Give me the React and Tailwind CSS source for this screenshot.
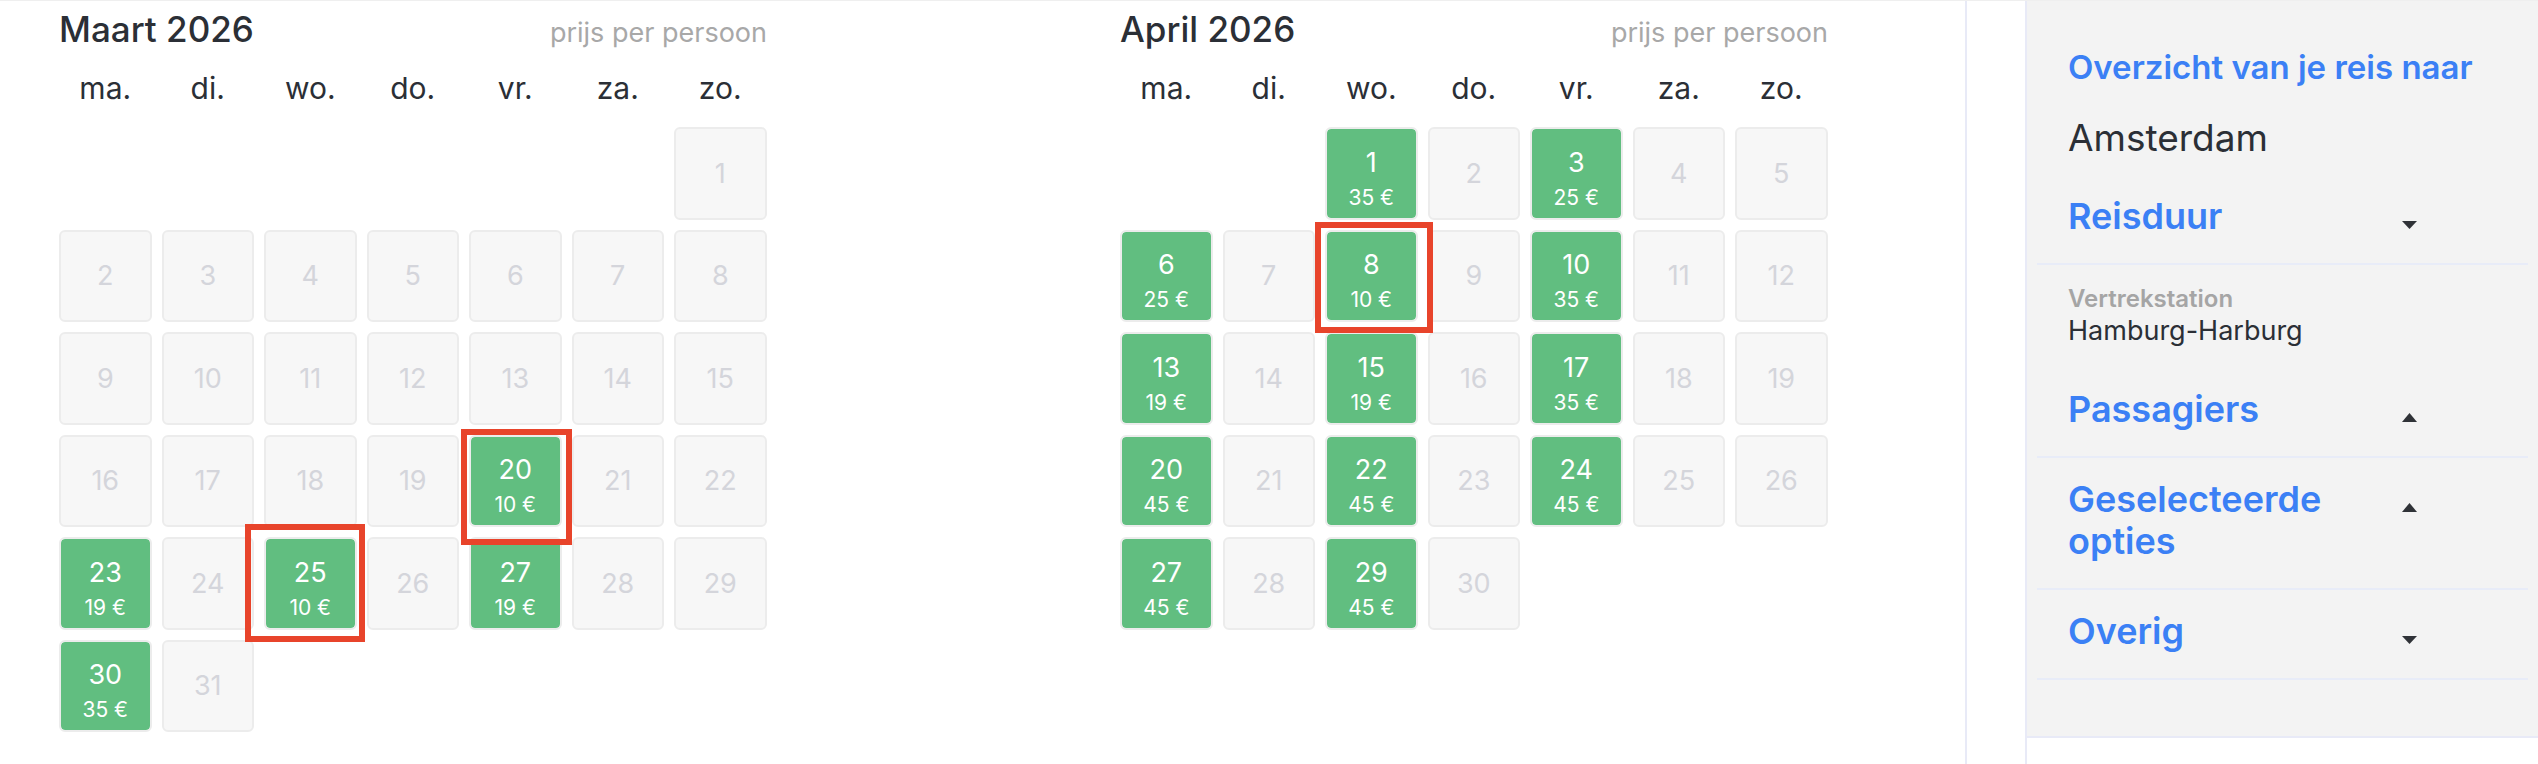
import React from 'react';

const WEEKDAYS = ['ma.', 'di.', 'wo.', 'do.', 'vr.', 'za.', 'zo.'];

const MONTHS = [
  {
    title: 'Maart 2026',
    offset: 6,
    days: 31,
    prices: { 20: 10, 23: 19, 25: 10, 27: 19, 30: 35 },
  },
  {
    title: 'April 2026',
    offset: 2,
    days: 30,
    prices: { 1: 35, 3: 25, 6: 25, 8: 10, 10: 35, 13: 19, 15: 19, 17: 35, 20: 45, 22: 45, 24: 45, 27: 45, 29: 45 },
  },
];

// red annotation boxes drawn over the calendar
const MARKS = [
  'left-[461px] top-[428px] w-[111px] h-[116px]',
  'left-[245px] top-[523px] w-[120px] h-[118px]',
  'left-[1315px] top-[221px] w-[118px] h-[111px]',
];

function DayCell({ day, price }) {
  if (price) {
    return (
      <div className="rounded-[6px] border-2 border-[#ececec] bg-[#61be80] bg-clip-padding flex flex-col items-center justify-center pt-[10px] gap-[11px] text-white">
        <span className="text-[27px] leading-[27px]">{day}</span>
        <span className="text-[21px] leading-[21px]">{price} €</span>
      </div>
    );
  }
  return (
    <div className="rounded-[6px] border-2 border-[#ececec] bg-[#f7f7f7] flex items-center justify-center text-[27px] leading-[27px] text-[#d4d5db]">
      {day}
    </div>
  );
}

function Month({ title, offset, days, prices }) {
  const blanks = Array.from({ length: offset });
  const list = Array.from({ length: days }, (_, i) => i + 1);
  return (
    <div className="w-[708px]">
      <div className="h-[46px] flex justify-between items-baseline pt-[10px]">
        <span className="text-[35px] leading-[36px] font-medium text-[#2b2f36]">{title}</span>
        <span className="text-[27px] leading-[30px] text-[#a8a8a8]">prijs per persoon</span>
      </div>
      <div className="mt-[26px] grid grid-cols-[repeat(7,92.5px)] gap-x-[10px] text-[30px] leading-[30px] text-center text-[#2b2f36]">
        {WEEKDAYS.map((w) => (
          <span key={w}>{w}</span>
        ))}
      </div>
      <div className="mt-[24px] grid grid-cols-[repeat(7,92.5px)] auto-rows-[92.5px] gap-[10px]">
        {blanks.map((_, i) => (
          <div key={'b' + i} />
        ))}
        {list.map((d) => (
          <DayCell key={d} day={d} price={prices[d]} />
        ))}
      </div>
    </div>
  );
}

function Triangle({ up }) {
  return up ? (
    <svg width="15" height="9" viewBox="0 0 15 9" className="mt-[25px]">
      <polygon points="7.5,0 15,9 0,9" fill="#2f3237" />
    </svg>
  ) : (
    <svg width="15" height="8" viewBox="0 0 15 8" className="mt-[26px]">
      <polygon points="0,0 15,0 7.5,8" fill="#2f3237" />
    </svg>
  );
}

function AccordionRow({ title, up, className = '' }) {
  return (
    <div className={'flex items-start pl-[31px] pt-[20px] pb-[26px] border-b-2 border-[#e8ecf8] ' + className}>
      <div className="w-[334px] text-[36px] leading-[42px] font-semibold text-[#3b80f5]">{title}</div>
      <Triangle up={up} />
    </div>
  );
}

export default function App() {
  return (
    <div
      className="relative w-[2538px] h-[764px] bg-white flex overflow-hidden border-t border-[#efefef]"
      style={{ fontFamily: 'Inter, "Noto Sans", sans-serif' }}
    >
      {/* Calendars */}
      <div className="w-[1967px] shrink-0 border-r-2 border-[#e8eaf7] flex pl-[59px] gap-[353px]">
        {MONTHS.map((m) => (
          <Month key={m.title} {...m} />
        ))}
      </div>

      {/* Trip summary */}
      <div className="ml-[58px] flex-1 border-l-2 border-[#e8eaf7] flex flex-col">
        <div className="h-[737px] bg-[#f3f3f3] border-b-2 border-[#e8eaf7] px-[10px] pt-[46px]">
          <div className="pl-[31px]">
            <div className="text-[33px] leading-[40px] font-semibold text-[#3b80f5]">Overzicht van je reis naar</div>
            <div className="mt-[29px] text-[37px] leading-[44px] text-[#2b2f36]">Amsterdam</div>
          </div>
          <AccordionRow title="Reisduur" className="mt-[15px]" />
          <div className="pl-[31px] pt-[19px] pb-[20px]">
            <div className="text-[24px] leading-[30px] font-semibold text-[#a5a5a5]">Vertrekstation</div>
            <div className="text-[27px] leading-[34px] text-[#2b2f36]">Hamburg-Harburg</div>
          </div>
          <AccordionRow title="Passagiers" up />
          <AccordionRow title="Geselecteerde opties" up />
          <AccordionRow title="Overig" />
        </div>
      </div>

      {MARKS.map((c) => (
        <div key={c} className={'absolute border-[6px] border-[#e8442b] ' + c} />
      ))}
    </div>
  );
}
